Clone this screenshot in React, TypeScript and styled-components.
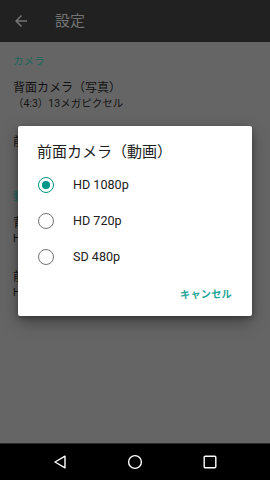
import React from "react";
import styled, { createGlobalStyle } from "styled-components";

const GlobalStyle = createGlobalStyle`
  html, body {
    margin: 0;
    padding: 0;
    width: 270px;
    height: 480px;
    overflow: hidden;
    background: #656565;
  }
  * { box-sizing: border-box; }
`;

const FONT = `Roboto, "Noto Sans CJK JP", "Noto Sans", sans-serif`;

const Screen = styled.div`
  position: relative;
  width: 270px;
  height: 480px;
  display: flex;
  flex-direction: column;
  font-family: ${FONT};
  background: #656565;
`;

const AppBar = styled.header`
  height: 42px;
  flex: none;
  background: #212121;
  display: flex;
  align-items: center;
  padding-left: 12px;
`;

const AppTitle = styled.h1`
  margin: 0 0 0 25px;
  font-size: 15px;
  font-weight: 400;
  line-height: 20px;
  color: #737373;
`;

const Content = styled.main`
  flex: 1;
  display: flex;
  flex-direction: column;
`;

const Category = styled.div`
  height: 27px;
  padding: 13px 0 0 13px;
  font-size: 10.5px;
  line-height: 14px;
  color: #1d685d;
`;

const Pref = styled.div`
  height: 54px;
  padding: 11px 0 0 13px;
  display: flex;
  flex-direction: column;
`;

const PrefTitle = styled.div`
  font-size: 12px;
  line-height: 16px;
  color: #121212;
`;

const PrefSummary = styled.div`
  font-size: 10.5px;
  line-height: 16px;
  color: #141414;
`;

const NavBar = styled.nav`
  height: 37px;
  flex: none;
  background: #000;
  border-top: 1px solid #2a2a2a;
  display: flex;
  align-items: center;
  justify-content: center;
  gap: 58px;
`;

const NavSlot = styled.div`
  width: 17px;
  height: 17px;
  display: flex;
  align-items: center;
  justify-content: center;
`;

const Dialog = styled.div`
  position: absolute;
  left: 18px;
  top: 126px;
  width: 234px;
  height: 190px;
  background: #fff;
  border-radius: 2px;
  box-shadow: 0 6px 16px rgba(0, 0, 0, 0.35), 0 2px 4px rgba(0, 0, 0, 0.25);
  display: flex;
  flex-direction: column;
`;

const DialogTitle = styled.h2`
  margin: 0;
  padding: 16px 0 0 19px;
  font-size: 15px;
  font-weight: 400;
  line-height: 20px;
  color: #212121;
`;

const OptionList = styled.div`
  margin-top: 5px;
  display: flex;
  flex-direction: column;
`;

const Option = styled.div`
  height: 36px;
  display: flex;
  align-items: center;
  padding-left: 20px;
`;

const Radio = styled.span<{ $checked?: boolean }>`
  width: 16px;
  height: 16px;
  border-radius: 50%;
  border: 1.6px solid ${(p) => (p.$checked ? "#009688" : "#737373")};
  display: flex;
  align-items: center;
  justify-content: center;
  flex: none;
  &::after {
    content: "";
    width: 7.5px;
    height: 7.5px;
    border-radius: 50%;
    background: #009688;
    display: ${(p) => (p.$checked ? "block" : "none")};
  }
`;

const OptionLabel = styled.span`
  margin-left: 19px;
  font-size: 12.6px;
  line-height: 16px;
  color: #212121;
`;

const Actions = styled.div`
  margin-top: auto;
  padding: 0 20px 3px 0;
  height: 39px;
  display: flex;
  justify-content: flex-end;
  align-items: center;
`;

const TextButton = styled.button`
  border: none;
  background: none;
  padding: 0;
  font-family: ${FONT};
  font-size: 10.2px;
  font-weight: 700;
  line-height: 14px;
  color: #26a596;
  letter-spacing: 0.2px;
`;

const options = ["HD 1080p", "HD 720p", "SD 480p"];

export default function App() {
  return (
    <>
      <GlobalStyle />
      <Screen>
        <AppBar>
          <svg width="18" height="18" viewBox="0 0 24 24">
            <path
              fill="#757575"
              d="M20 11H7.83l5.59-5.59L12 4l-8 8 8 8 1.41-1.41L7.83 13H20v-2z"
            />
          </svg>
          <AppTitle>設定</AppTitle>
        </AppBar>
        <Content>
          <Category>カメラ</Category>
          <Pref>
            <PrefTitle>背面カメラ（写真）</PrefTitle>
            <PrefSummary>（4:3）13メガピクセル</PrefSummary>
          </Pref>
          <Pref>
            <PrefTitle>前面カメラ（写真）</PrefTitle>
            <PrefSummary>（4:3）5メガピクセル</PrefSummary>
          </Pref>
          <Category>動画</Category>
          <Pref>
            <PrefTitle>背面カメラ（動画）</PrefTitle>
            <PrefSummary>HD 1080p</PrefSummary>
          </Pref>
          <Pref>
            <PrefTitle>前面カメラ（動画）</PrefTitle>
            <PrefSummary>HD 1080p</PrefSummary>
          </Pref>
        </Content>
        <NavBar>
          <NavSlot>
            <svg width="14" height="14" viewBox="0 0 14 14">
              <path d="M12 1.2 L2 7 L12 12.8 Z" fill="none" stroke="#fff" strokeWidth="1.4" strokeLinejoin="round" />
            </svg>
          </NavSlot>
          <NavSlot>
            <svg width="16" height="16" viewBox="0 0 16 16">
              <circle cx="8" cy="8" r="6.4" fill="none" stroke="#fff" strokeWidth="1.4" />
            </svg>
          </NavSlot>
          <NavSlot>
            <svg width="14" height="14" viewBox="0 0 14 14">
              <rect x="1.2" y="1.2" width="11.6" height="11.6" rx="1" fill="none" stroke="#fff" strokeWidth="1.4" />
            </svg>
          </NavSlot>
        </NavBar>
        <Dialog>
          <DialogTitle>前面カメラ（動画）</DialogTitle>
          <OptionList>
            {options.map((o, i) => (
              <Option key={o}>
                <Radio $checked={i === 0} />
                <OptionLabel>{o}</OptionLabel>
              </Option>
            ))}
          </OptionList>
          <Actions>
            <TextButton>キャンセル</TextButton>
          </Actions>
        </Dialog>
      </Screen>
    </>
  );
}
